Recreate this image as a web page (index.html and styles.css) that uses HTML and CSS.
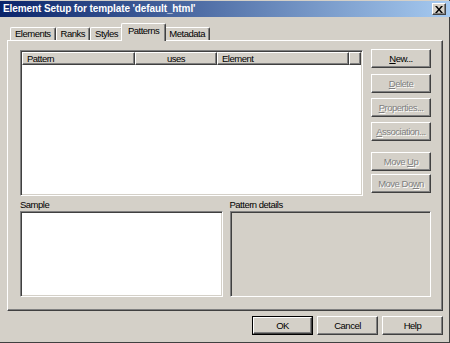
FILE: index.html
```html
<!DOCTYPE html>
<html>
<head>
<meta charset="utf-8">
<link rel="stylesheet" href="styles.css">
</head>
<body>
<div class="window">
  <div class="titlebar">
    <span class="title">Element Setup for template 'default_html'</span>
    <span class="close"><svg width="8" height="7" viewBox="0 0 8 7"><path d="M0 0h2l2 2.4L6 0h2L5 3.5 8 7H6L4 4.6 2 7H0l3-3.5z" fill="#000"/></svg></span>
  </div>
  <div class="tabs">
    <div class="tab">Elements</div>
    <div class="tab">Ranks</div>
    <div class="tab">Styles</div>
    <div class="tab active">Patterns</div>
    <div class="tab">Metadata</div>
  </div>
  <div class="panel">
    <div class="top-row">
      <div class="list sunken">
        <div class="list-header">
          <div class="col col-pattern">Pattern</div>
          <div class="col col-uses">uses</div>
          <div class="col col-element">Element</div>
          <div class="col col-fill"></div>
        </div>
        <div class="list-body"></div>
      </div>
      <div class="side-buttons">
        <div class="btn"><span><u>N</u>ew...</span></div>
        <div class="btn disabled gap-a"><span><u>D</u>elete</span></div>
        <div class="btn disabled gap-b"><span><u>P</u>roperties...</span></div>
        <div class="btn disabled gap-b"><span><u>A</u>ssociation...</span></div>
        <div class="btn disabled gap-c"><span>Move <u>U</u>p</span></div>
        <div class="btn disabled gap-d"><span>Move Do<u>w</u>n</span></div>
      </div>
    </div>
    <div class="bottom-row">
      <div class="group group-sample">
        <div class="label">Sample</div>
        <div class="box sunken white"></div>
      </div>
      <div class="group group-details">
        <div class="label">Pattern details</div>
        <div class="box sunken"></div>
      </div>
    </div>
  </div>
  <div class="footer">
    <div class="default-frame"><div class="btn footer-btn"><span>OK</span></div></div>
    <div class="btn footer-btn"><span>Cancel</span></div>
    <div class="btn footer-btn"><span>Help</span></div>
  </div>
</div>
</body>
</html>
```
FILE: styles.css
```css
html, body {
  margin: 0;
  padding: 0;
}
body {
  background: #D4D0C8;
  font-family: "Liberation Sans", Arial, sans-serif;
  font-size: 9.5px;
  letter-spacing: -0.5px;
  color: #000;
}
.window {
  width: 450px;
  height: 343px;
  box-sizing: border-box;
  padding-top: 1px;
  display: flex;
  flex-direction: column;
  box-shadow: inset -1px -1px #404040;
}
.titlebar {
  height: 16px;
  flex: none;
  background: linear-gradient(to right, #0A246A, #A6CAF0);
  display: flex;
  align-items: center;
  justify-content: space-between;
  padding: 0 4px 0 3px;
}
.title {
  color: #fff;
  font-weight: bold;
  font-size: 10px;
  letter-spacing: -0.1px;
  line-height: 16px;
}
.close {
  width: 14px;
  height: 12px;
  box-sizing: border-box;
  background: #D4D0C8;
  border: 1px solid;
  border-color: #fff #404040 #404040 #fff;
  box-shadow: inset -1px -1px #808080;
  display: flex;
  align-items: center;
  justify-content: center;
}
.close svg { display: block; }

.tabs {
  flex: none;
  height: 17px;
  margin-top: 6px;
  padding-left: 10px;
  display: flex;
  align-items: flex-end;
}
.tab {
  height: 13px;
  box-sizing: border-box;
  padding: 0 4px;
  line-height: 12px;
  border-top: 1px solid #fff;
  border-left: 1px solid #fff;
  border-right: 1px solid #404040;
  border-radius: 2px 2px 0 0;
  box-shadow: inset -1px 0 #808080;
  white-space: nowrap;
}
.tab.active {
  height: 18px;
  margin: 0 -2px -1px;
  padding: 0 6px;
  line-height: 14px;
  background: #D4D0C8;
  position: relative;
  z-index: 1;
}

.panel {
  flex: none;
  height: 271px;
  margin: 0 7px;
  box-sizing: border-box;
  border: 1px solid;
  border-color: #fff #404040 #404040 #fff;
  box-shadow: inset -1px -1px #808080;
  padding: 9px 11px 0 12px;
  display: flex;
  flex-direction: column;
}
.sunken {
  box-sizing: border-box;
  border: 1px solid;
  border-color: #808080 #fff #fff #808080;
  box-shadow: inset 1px 1px #404040, inset -1px -1px #D4D0C8;
}
.top-row {
  display: flex;
  gap: 8px;
  height: 146px;
  flex: none;
}
.list {
  width: 343px;
  height: 146px;
  background: #fff;
  padding: 1px;
  display: flex;
  flex-direction: column;
}
.list-header {
  display: flex;
  height: 13px;
  flex: none;
}
.col {
  box-sizing: border-box;
  height: 13px;
  background: #D4D0C8;
  border: 1px solid;
  border-color: #fff #404040 #404040 #fff;
  box-shadow: inset -1px -1px #808080;
  line-height: 11px;
  padding: 0 4px;
  white-space: nowrap;
}
.col-pattern { width: 113px; }
.col-uses { width: 82px; text-align: center; }
.col-element { width: 132px; }
.col-fill { flex: 1; }
.list-body { flex: 1; }

.side-buttons {
  display: flex;
  flex-direction: column;
  width: 60px;
  margin-top: -1px;
}
.btn {
  box-sizing: border-box;
  height: 19px;
  background: #D4D0C8;
  border: 1px solid;
  border-color: #fff #404040 #404040 #fff;
  box-shadow: inset -1px -1px #808080;
  display: flex;
  align-items: center;
  justify-content: center;
  white-space: nowrap;
  line-height: 12px;
}
.btn.disabled {
  color: #808080;
  text-shadow: 1px 1px #fff;
}
.gap-a { margin-top: 6px; }
.gap-b { margin-top: 5px; }
.gap-c { margin-top: 11px; }
.gap-d { margin-top: 3px; }

.bottom-row {
  display: flex;
  gap: 7px;
  margin-top: 3px;
}
.group {
  display: flex;
  flex-direction: column;
}
.group-sample { width: 203px; }
.group-details { width: 202px; }
.label {
  height: 12px;
  line-height: 12px;
}
.box {
  height: 86px;
  background: #D4D0C8;
}
.box.white { background: #fff; }

.footer {
  flex: none;
  display: flex;
  justify-content: flex-end;
  align-items: center;
  gap: 4px;
  margin-top: 5px;
  padding-right: 7px;
}
.footer-btn { width: 61px; }
.default-frame {
  border: 1px solid #000;
  display: flex;
  margin: -1px 0;
}
.default-frame .footer-btn {
  width: 59px;
  height: 17px;
}
```
